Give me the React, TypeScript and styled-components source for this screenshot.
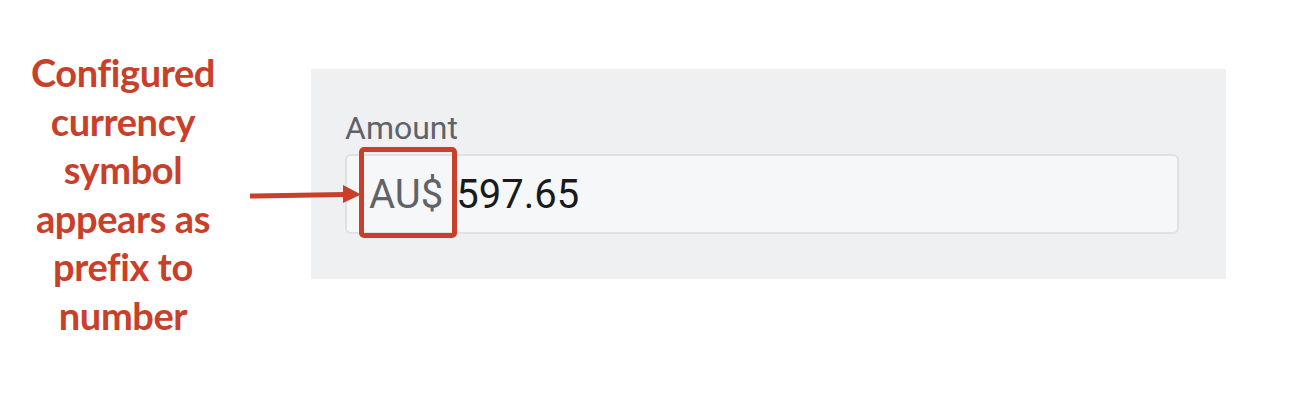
import React from 'react';
import styled, { createGlobalStyle } from 'styled-components';

const GlobalStyle = createGlobalStyle`
  html, body {
    margin: 0;
    padding: 0;
    background: #ffffff;
  }
  body {
    font-family: Roboto, 'Liberation Sans', sans-serif;
  }
`;

const ANNOTATION_RED = '#c9402a';

const Page = styled.div`
  position: relative;
  display: flex;
  align-items: flex-start;
  width: 1310px;
  height: 414px;
  overflow: hidden;
`;

const Callout = styled.p`
  width: 246px;
  margin: 0;
  padding-top: 48px;
  font-family: Lato, 'Open Sans', sans-serif;
  font-weight: 700;
  font-size: 38px;
  letter-spacing: -0.4px;
  line-height: 48.6px;
  color: ${ANNOTATION_RED};
  text-align: center;
`;

const Panel = styled.section`
  margin: 69px 0 0 65px;
  width: 915px;
  box-sizing: border-box;
  padding: 41px 47px 45px 34px;
  background: #eff0f2;
`;

const Label = styled.label`
  display: block;
  font-size: 32px;
  line-height: 37.5px;
  color: #5f6368;
  margin-bottom: 6.5px;
`;

const Field = styled.div`
  position: relative;
  display: flex;
  align-items: center;
  height: 80px;
  box-sizing: border-box;
  padding: 0 22px;
  border: 2px solid #dfe1e4;
  border-radius: 6px;
  background: #f6f7f9;
  font-size: 40px;
`;

const Prefix = styled.span`
  color: #5f6368;
  margin-right: 13px;
`;

const Value = styled.span`
  color: #1a1a1a;
`;

const Highlight = styled.span`
  position: absolute;
  left: 12px;
  top: -9px;
  width: 98px;
  height: 91px;
  box-sizing: border-box;
  border: 5px solid ${ANNOTATION_RED};
  border-radius: 5px;
  pointer-events: none;
`;

const Arrow = styled.svg`
  position: absolute;
  left: 248px;
  top: 182px;
`;

export default function App() {
  return (
    <>
      <GlobalStyle />
      <Page>
        <Callout>
          Configured
          <br />
          currency
          <br />
          symbol
          <br />
          appears as
          <br />
          prefix to
          <br />
          number
        </Callout>
        <Panel>
          <Label htmlFor="amount">Amount</Label>
          <Field id="amount">
            <Prefix>AU$</Prefix>
            <Value>597.65</Value>
            <Highlight />
          </Field>
        </Panel>
        <Arrow width="114" height="24" viewBox="0 0 114 24">
          <line x1="2" y1="14" x2="97" y2="12.5" stroke={ANNOTATION_RED} strokeWidth="5" />
          <polygon points="95,3 113,12.5 95,21" fill={ANNOTATION_RED} />
        </Arrow>
      </Page>
    </>
  );
}
